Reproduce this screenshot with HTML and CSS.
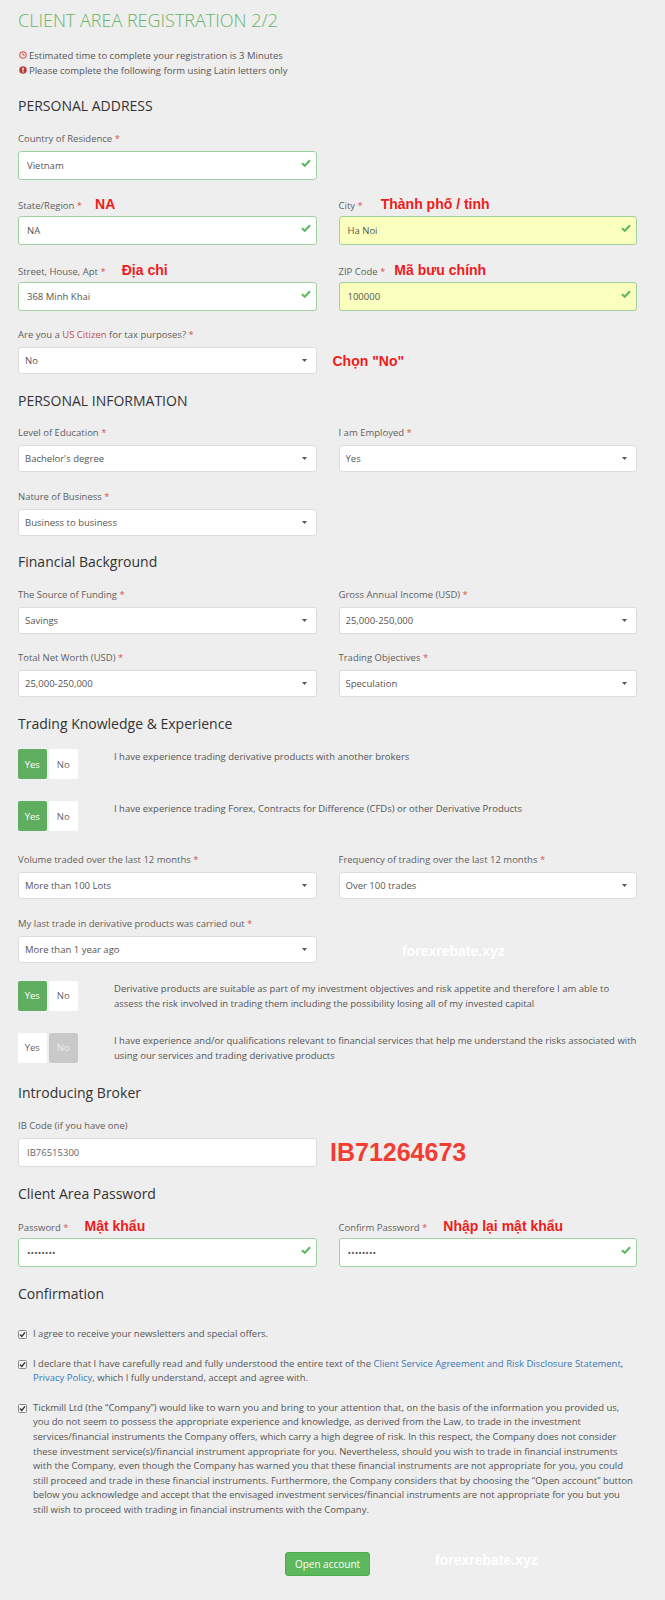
FILE: index.html
```html
<!DOCTYPE html>
<html lang="en">
<head>
    <meta charset="UTF-8">
    <meta name="viewport" content="width=device-width, initial-scale=1.0">
    <title>Client Area Registration 2/2</title>
    <link rel="stylesheet" href="styles.css">
</head>
<body>
<div class="page">
    <h1 class="title">CLIENT AREA REGISTRATION 2/2</h1>

    <div class="notice">
        <p class="info">
            <svg class="info-icon" viewBox="0 0 10 10"><circle cx="5" cy="5" r="4" fill="none" stroke="#d9534f" stroke-width="1.4"/><path d="M5 2.4V5.2H7.2" fill="none" stroke="#d9534f" stroke-width="1.2"/></svg>
            Estimated time to complete your registration is 3 Minutes
        </p>
        <p class="info">
            <svg class="info-icon" viewBox="0 0 10 10"><circle cx="5" cy="5" r="4.7" fill="#b53c38"/><rect x="4.2" y="2" width="1.6" height="3.8" fill="#fff"/><rect x="4.2" y="6.6" width="1.6" height="1.5" fill="#fff"/></svg>
            Please complete the following form using Latin letters only
        </p>
    </div>

    <!-- Personal address -->
    <h2 class="section">PERSONAL ADDRESS</h2>
    <div class="grid">
        <div class="field">
            <label class="lbl">Country of Residence <span class="req">*</span></label>
            <div class="control">
                <input class="inp valid" type="text" value="Vietnam">
                <svg class="check" viewBox="0 0 10 8"><path d="M1 4.2 3.8 6.8 9 1.2" fill="none" stroke="#5cb85c" stroke-width="2"/></svg>
            </div>
        </div>
        <div class="field new-row">
            <label class="lbl">State/Region <span class="req">*</span><span class="note tight">NA</span></label>
            <div class="control">
                <input class="inp valid" type="text" value="NA">
                <svg class="check" viewBox="0 0 10 8"><path d="M1 4.2 3.8 6.8 9 1.2" fill="none" stroke="#5cb85c" stroke-width="2"/></svg>
            </div>
        </div>
        <div class="field">
            <label class="lbl">City <span class="req">*</span><span class="note wide">Thành phố / tỉnh</span></label>
            <div class="control">
                <input class="inp valid autofill" type="text" value="Ha Noi">
                <svg class="check" viewBox="0 0 10 8"><path d="M1 4.2 3.8 6.8 9 1.2" fill="none" stroke="#5cb85c" stroke-width="2"/></svg>
            </div>
        </div>
        <div class="field">
            <label class="lbl">Street, House, Apt <span class="req">*</span><span class="note">Địa chỉ</span></label>
            <div class="control">
                <input class="inp valid" type="text" value="368 Minh Khai">
                <svg class="check" viewBox="0 0 10 8"><path d="M1 4.2 3.8 6.8 9 1.2" fill="none" stroke="#5cb85c" stroke-width="2"/></svg>
            </div>
        </div>
        <div class="field">
            <label class="lbl">ZIP Code <span class="req">*</span><span class="note narrow">Mã bưu chính</span></label>
            <div class="control">
                <input class="inp valid autofill" type="text" value="100000">
                <svg class="check" viewBox="0 0 10 8"><path d="M1 4.2 3.8 6.8 9 1.2" fill="none" stroke="#5cb85c" stroke-width="2"/></svg>
            </div>
        </div>
        <div class="field">
            <label class="lbl">Are you a <span class="hl">US Citizen</span> for tax purposes? <span class="req">*</span></label>
            <div class="control">
                <select class="inp"><option>No</option></select>
                <svg class="caret" viewBox="0 0 5 3"><path d="M0 0H5L2.5 3Z" fill="#555"/></svg>
            </div>
        </div>
        <div class="side-note">
            <span class="note-big">Chọn "No"</span>
        </div>
    </div>

    <!-- Personal information -->
    <h2 class="section">PERSONAL INFORMATION</h2>
    <div class="grid">
        <div class="field">
            <label class="lbl">Level of Education <span class="req">*</span></label>
            <div class="control">
                <select class="inp"><option>Bachelor's degree</option></select>
                <svg class="caret" viewBox="0 0 5 3"><path d="M0 0H5L2.5 3Z" fill="#555"/></svg>
            </div>
        </div>
        <div class="field">
            <label class="lbl">I am Employed <span class="req">*</span></label>
            <div class="control">
                <select class="inp"><option>Yes</option></select>
                <svg class="caret" viewBox="0 0 5 3"><path d="M0 0H5L2.5 3Z" fill="#555"/></svg>
            </div>
        </div>
        <div class="field">
            <label class="lbl">Nature of Business <span class="req">*</span></label>
            <div class="control">
                <select class="inp"><option>Business to business</option></select>
                <svg class="caret" viewBox="0 0 5 3"><path d="M0 0H5L2.5 3Z" fill="#555"/></svg>
            </div>
        </div>
    </div>

    <!-- Financial background -->
    <h2 class="section">Financial Background</h2>
    <div class="grid">
        <div class="field">
            <label class="lbl">The Source of Funding <span class="req">*</span></label>
            <div class="control">
                <select class="inp"><option>Savings</option></select>
                <svg class="caret" viewBox="0 0 5 3"><path d="M0 0H5L2.5 3Z" fill="#555"/></svg>
            </div>
        </div>
        <div class="field">
            <label class="lbl">Gross Annual Income (USD) <span class="req">*</span></label>
            <div class="control">
                <select class="inp"><option>25,000-250,000</option></select>
                <svg class="caret" viewBox="0 0 5 3"><path d="M0 0H5L2.5 3Z" fill="#555"/></svg>
            </div>
        </div>
        <div class="field">
            <label class="lbl">Total Net Worth (USD) <span class="req">*</span></label>
            <div class="control">
                <select class="inp"><option>25,000-250,000</option></select>
                <svg class="caret" viewBox="0 0 5 3"><path d="M0 0H5L2.5 3Z" fill="#555"/></svg>
            </div>
        </div>
        <div class="field">
            <label class="lbl">Trading Objectives <span class="req">*</span></label>
            <div class="control">
                <select class="inp"><option>Speculation</option></select>
                <svg class="caret" viewBox="0 0 5 3"><path d="M0 0H5L2.5 3Z" fill="#555"/></svg>
            </div>
        </div>
    </div>

    <!-- Trading knowledge -->
    <h2 class="section">Trading Knowledge &amp; Experience</h2>
    <div class="toggle-row">
        <div class="toggle"><button class="tg on">Yes</button><button class="tg">No</button></div>
        <p class="toggle-text">I have experience trading derivative products with another brokers</p>
    </div>
    <div class="toggle-row">
        <div class="toggle"><button class="tg on">Yes</button><button class="tg">No</button></div>
        <p class="toggle-text">I have experience trading Forex, Contracts for Difference (CFDs) or other Derivative Products</p>
    </div>
    <div class="grid spaced">
        <div class="field">
            <label class="lbl">Volume traded over the last 12 months <span class="req">*</span></label>
            <div class="control">
                <select class="inp"><option>More than 100 Lots</option></select>
                <svg class="caret" viewBox="0 0 5 3"><path d="M0 0H5L2.5 3Z" fill="#555"/></svg>
            </div>
        </div>
        <div class="field">
            <label class="lbl">Frequency of trading over the last 12 months <span class="req">*</span></label>
            <div class="control">
                <select class="inp"><option>Over 100 trades</option></select>
                <svg class="caret" viewBox="0 0 5 3"><path d="M0 0H5L2.5 3Z" fill="#555"/></svg>
            </div>
        </div>
        <div class="field">
            <label class="lbl">My last trade in derivative products was carried out <span class="req">*</span></label>
            <div class="control">
                <select class="inp"><option>More than 1 year ago</option></select>
                <svg class="caret" viewBox="0 0 5 3"><path d="M0 0H5L2.5 3Z" fill="#555"/></svg>
            </div>
        </div>
    </div>
    <div class="toggle-row">
        <div class="toggle"><button class="tg on">Yes</button><button class="tg">No</button></div>
        <p class="toggle-text">Derivative products are suitable as part of my investment objectives and risk appetite and therefore I am able to assess the risk involved in trading them including the possibility losing all of my invested capital</p>
    </div>
    <div class="toggle-row last">
        <div class="toggle"><button class="tg">Yes</button><button class="tg off">No</button></div>
        <p class="toggle-text">I have experience and/or qualifications relevant to financial services that help me understand the risks associated with using our services and trading derivative products</p>
    </div>

    <!-- Introducing broker -->
    <h2 class="section">Introducing Broker</h2>
    <div class="grid">
        <div class="field">
            <label class="lbl">IB Code (if you have one)</label>
            <div class="control">
                <input class="inp ib" type="text" value="IB76515300">
            </div>
        </div>
        <div class="ib-note">IB71264673</div>
    </div>

    <!-- Password -->
    <h2 class="section">Client Area Password</h2>
    <div class="grid">
        <div class="field">
            <label class="lbl">Password <span class="req">*</span><span class="note">Mật khẩu</span></label>
            <div class="control">
                <input class="inp valid" type="password" value="12345678">
                <svg class="check" viewBox="0 0 10 8"><path d="M1 4.2 3.8 6.8 9 1.2" fill="none" stroke="#5cb85c" stroke-width="2"/></svg>
            </div>
        </div>
        <div class="field">
            <label class="lbl">Confirm Password <span class="req">*</span><span class="note">Nhập lại mật khẩu</span></label>
            <div class="control">
                <input class="inp valid" type="password" value="12345678">
                <svg class="check" viewBox="0 0 10 8"><path d="M1 4.2 3.8 6.8 9 1.2" fill="none" stroke="#5cb85c" stroke-width="2"/></svg>
            </div>
        </div>
    </div>

    <!-- Confirmation -->
    <h2 class="section">Confirmation</h2>
    <ul class="confirm">
        <li>
            <svg class="cb" viewBox="0 0 9 9"><rect x="0.5" y="0.5" width="8" height="8" rx="1" fill="#f4f4f4" stroke="#8a8a8a"/><path d="M2 4.6 3.8 6.4 7 2.4" fill="none" stroke="#333" stroke-width="1.4"/></svg>
            <span>I agree to receive your newsletters and special offers.</span>
        </li>
        <li>
            <svg class="cb" viewBox="0 0 9 9"><rect x="0.5" y="0.5" width="8" height="8" rx="1" fill="#f4f4f4" stroke="#8a8a8a"/><path d="M2 4.6 3.8 6.4 7 2.4" fill="none" stroke="#333" stroke-width="1.4"/></svg>
            <span>I declare that I have carefully read and fully understood the entire text of the <a href="#" class="link">Client Service Agreement and Risk Disclosure Statement</a>, <a href="#" class="link">Privacy Policy</a>, which I fully understand, accept and agree with.</span>
        </li>
        <li>
            <svg class="cb" viewBox="0 0 9 9"><rect x="0.5" y="0.5" width="8" height="8" rx="1" fill="#f4f4f4" stroke="#8a8a8a"/><path d="M2 4.6 3.8 6.4 7 2.4" fill="none" stroke="#333" stroke-width="1.4"/></svg>
            <span>Tickmill Ltd (the “Company”) would like to warn you and bring to your attention that, on the basis of the information you provided us, you do not seem to possess the appropriate experience and knowledge, as derived from the Law, to trade in the investment services/financial instruments the Company offers, which carry a high degree of risk. In this respect, the Company does not consider these investment service(s)/financial instrument appropriate for you. Nevertheless, should you wish to trade in financial instruments with the Company, even though the Company has warned you that these financial instruments are not appropriate for you, you could still proceed and trade in these financial instruments. Furthermore, the Company considers that by choosing the “Open account” button below you acknowledge and accept that the envisaged investment services/financial instruments are not appropriate for you but you still wish to proceed with trading in financial instruments with the Company.</span>
        </li>
    </ul>

    <div class="actions">
        <button class="btn">Open account</button>
    </div>

    <span class="wm wm-1">forexrebate.xyz</span>
    <span class="wm wm-2">forexrebate.xyz</span>
</div>
</body>
</html>
```

FILE: styles.css
```css
* {
    box-sizing: border-box;
}

body {
    margin: 0;
    background-color: #eeeeee;
    font-family: 'Open Sans', 'Liberation Sans', sans-serif;
    font-size: 9.5px;
    color: #555;
}

.page {
    position: relative;
    padding: 8px 28px 26px 18px;
}

.title {
    margin: 0;
    font-size: 18px;
    line-height: 24px;
    font-weight: 300;
    color: #66b466;
}

/* Notice lines */
.notice {
    margin: 15.5px 0 18.5px;
}

.info {
    margin: 0;
    display: flex;
    align-items: center;
    line-height: 15px;
    color: #555;
}

.info-icon {
    width: 8px;
    height: 8px;
    margin: 0 2px 0 1px;
}

/* Section headings */
.section {
    margin: 16.5px 0 15.5px;
    font-size: 14px;
    line-height: 20px;
    font-weight: 400;
    color: #333;
}

/* Form grid */
.grid {
    display: grid;
    grid-template-columns: 1fr 1fr;
    column-gap: 22px;
    row-gap: 17.5px;
}

.grid.spaced {
    margin-bottom: 18px;
}

.new-row {
    grid-column: 1;
}

.lbl {
    display: block;
    height: 14px;
    line-height: 14px;
    margin-bottom: 5px;
    color: #5e5e5e;
    white-space: nowrap;
}

.req {
    color: #d9534f;
}

.hl {
    color: #c0504d;
}

.control {
    position: relative;
}

.inp {
    display: block;
    width: 100%;
    height: 29px;
    padding: 0 8px;
    border: 1px solid #dcdcdc;
    border-radius: 3px;
    background-color: #fff;
    font-family: 'Open Sans', 'Liberation Sans', sans-serif;
    font-size: 9.5px;
    color: #555;
    outline: none;
}

.inp.valid {
    border-color: #9fd19f;
}

.inp.autofill {
    background-color: #faffbd;
}

.inp.ib {
    color: #666;
}

select.inp {
    height: 27px;
    padding: 0 6px;
    appearance: none;
    -webkit-appearance: none;
}

.check {
    position: absolute;
    right: 6px;
    top: 8px;
    width: 10px;
    height: 8px;
}

.caret {
    position: absolute;
    right: 10px;
    top: 12px;
    width: 5px;
    height: 3px;
}

/* Red hand-written notes */
.note {
    margin-left: 16px;
    font-family: 'Liberation Sans', Arial, sans-serif;
    font-size: 14px;
    font-weight: bold;
    color: #ee1c1c;
}

.note.tight {
    margin-left: 13px;
}

.note.narrow {
    margin-left: 9px;
}

.note.wide {
    margin-left: 18px;
}

.side-note {
    padding-top: 25px;
    margin-left: -6px;
}

.note-big {
    font-family: 'Liberation Sans', Arial, sans-serif;
    font-size: 14px;
    line-height: 16px;
    font-weight: bold;
    color: #ee1c1c;
}

.ib-note {
    padding-top: 18.5px;
    margin-left: -8.5px;
    font-family: 'Liberation Sans', Arial, sans-serif;
    font-size: 25px;
    line-height: 30px;
    font-weight: bold;
    color: #f23d33;
}

/* Yes / No toggles */
.toggle-row {
    display: grid;
    grid-template-columns: 96px 1fr;
    margin-bottom: 22px;
}

.toggle-row.last {
    margin-bottom: 20.5px;
}

.toggle {
    display: flex;
    gap: 2.5px;
    align-self: start;
}

.tg {
    width: 28.5px;
    height: 30px;
    padding: 0;
    border: none;
    border-radius: 2px;
    background-color: #fff;
    font-family: 'Open Sans', 'Liberation Sans', sans-serif;
    font-size: 9.5px;
    color: #666;
}

.tg.on {
    background-color: #5fae5f;
    color: #fff;
}

.tg.off {
    background-color: #c9c9c9;
    color: #ededed;
}

.toggle-text {
    margin: 0;
    line-height: 15px;
    color: #555;
}

/* Confirmation */
.confirm {
    list-style: none;
    margin: 0;
    padding: 8px 0 0;
}

.confirm li {
    display: grid;
    grid-template-columns: 15px 1fr;
    line-height: 14.6px;
    margin-bottom: 15px;
    color: #555;
}

.confirm li:last-child {
    margin-bottom: 0;
}

.cb {
    width: 9px;
    height: 9px;
    margin-top: 3px;
}

.link {
    color: #3a78b5;
    text-decoration: none;
}

.actions {
    display: flex;
    justify-content: center;
    margin-top: 34px;
}

.btn {
    height: 24px;
    padding: 0 9px;
    border: 1px solid #4cae4c;
    border-radius: 3px;
    background-color: #5cb85c;
    font-family: 'Open Sans', 'Liberation Sans', sans-serif;
    font-size: 10px;
    color: #fff;
}

/* Watermarks */
.wm {
    position: absolute;
    font-family: 'Liberation Sans', Arial, sans-serif;
    font-size: 14px;
    line-height: 16px;
    font-weight: bold;
    color: #fff;
}

.wm-1 {
    left: 402px;
    top: 943px;
}

.wm-2 {
    left: 435px;
    top: 1552px;
}
```
